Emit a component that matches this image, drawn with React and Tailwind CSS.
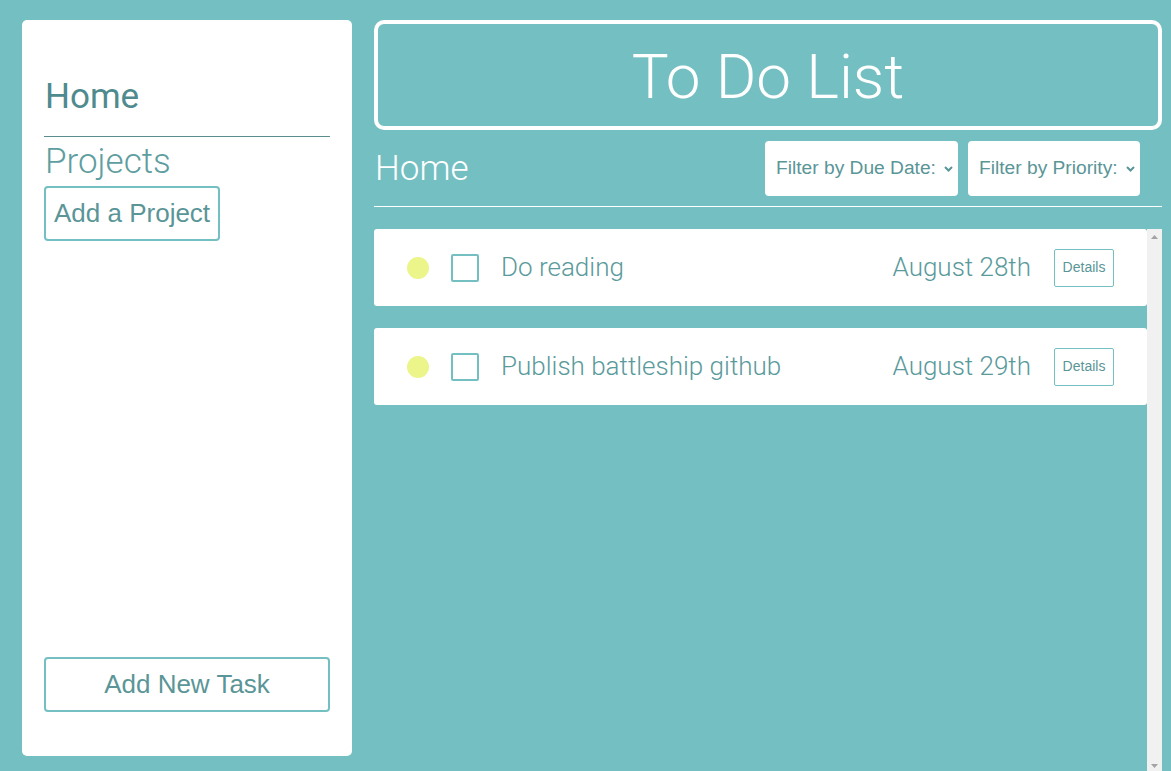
import React from "react";

const tasks = [
  { title: "Do reading", date: "August 28th" },
  { title: "Publish battleship github", date: "August 29th" },
];

function Chevron() {
  return (
    <svg width="9" height="6" viewBox="0 0 9 6" className="shrink-0">
      <path d="M1 1 L4.5 4.5 L8 1" fill="none" stroke="#5a9597" strokeWidth="2" />
    </svg>
  );
}

function FilterSelect({ label, width }) {
  return (
    <div
      className={`h-[55px] ${width} bg-white rounded-[4px] flex items-center justify-between pl-[11px] pr-[5px] text-[19.2px] text-[#5a9597]`}
      style={{ fontFamily: '"Liberation Sans", Arial, sans-serif' }}
    >
      <span>{label}</span>
      <Chevron />
    </div>
  );
}

export default function App() {
  return (
    <div
      className="h-[771px] w-full overflow-hidden bg-[#74bfc2] flex pt-[20px] pl-[22px] pr-[9px]"
      style={{ fontFamily: 'Roboto, "Liberation Sans", sans-serif' }}
    >
      {/* Sidebar */}
      <aside className="w-[330px] h-[736px] shrink-0 bg-white rounded-[5px] flex flex-col px-[22px] pt-[56px] pb-[44px]">
        <div className="text-[35px] leading-[42px] text-[#4f8b8e] pl-[1px]">Home</div>
        <div className="mt-[18px] h-px bg-[#5a8e8f]" />
        <div className="mt-[4px] text-[35px] leading-[41px] font-light text-[#5f9ea0] pl-[1px]">Projects</div>
        <div>
          <button
            className="mt-[4px] h-[55px] px-[8px] border-2 border-[#74bfc2] rounded-[4px] text-[26px] text-[#5a9597] bg-white"
            style={{ fontFamily: '"Liberation Sans", Arial, sans-serif' }}
          >
            Add a Project
          </button>
        </div>
        <button
          className="mt-auto h-[55px] w-full border-2 border-[#74bfc2] rounded-[4px] text-[26px] text-[#5a9597] bg-white"
          style={{ fontFamily: '"Liberation Sans", Arial, sans-serif' }}
        >
          Add New Task
        </button>
      </aside>

      {/* Main */}
      <main className="ml-[22px] w-[788px] flex flex-col min-h-0">
        <header className="h-[110px] border-[4px] border-white rounded-[10px] flex items-center justify-center pt-[3px]">
          <h1 className="text-[62px] font-light text-white leading-none">To Do List</h1>
        </header>

        <div className="mt-[11px] h-[55px] flex items-center justify-between pr-[22px]">
          <h2 className="text-[35px] font-light text-white pl-[1px] pt-[2px]">Home</h2>
          <div className="flex gap-[10px]">
            <FilterSelect label="Filter by Due Date:" width="w-[193px]" />
            <FilterSelect label="Filter by Priority:" width="w-[172px]" />
          </div>
        </div>

        <div className="mt-[10px] h-px bg-white" />

        <div className="mt-[22px] flex-1 min-h-0 flex">
          <div className="flex-1 flex flex-col gap-[22px]">
            {tasks.map((t) => (
              <div
                key={t.title}
                className="h-[77px] bg-white rounded-[3px] flex items-center pl-[33px] pr-[33px]"
              >
                <div className="w-[22px] h-[22px] rounded-full bg-[#ebf58a] shrink-0" />
                <div className="ml-[22px] w-[28px] h-[28px] border-2 border-[#74bfc2] rounded-[2px] shrink-0" />
                <div className="ml-[22px] text-[26px] font-light text-[#5a9a9c]">{t.title}</div>
                <div className="ml-auto text-[26px] font-light text-[#5a9a9c]">{t.date}</div>
                <button
                  className="ml-[23px] w-[60px] h-[38px] border border-[#74bfc2] rounded-[2px] text-[14px] text-[#5a9597] bg-white"
                  style={{ fontFamily: '"Liberation Sans", Arial, sans-serif' }}
                >
                  Details
                </button>
              </div>
            ))}
          </div>
          {/* scrollbar track */}
          <div className="w-[15px] shrink-0 bg-[#f1f1f1] flex flex-col items-center justify-between pt-[6px] pb-[3px]">
            <svg width="7" height="4" viewBox="0 0 7 4">
              <path d="M0 4 L3.5 0 L7 4 Z" fill="#a3a3a3" />
            </svg>
            <svg width="7" height="4" viewBox="0 0 7 4">
              <path d="M0 0 L3.5 4 L7 0 Z" fill="#a3a3a3" />
            </svg>
          </div>
        </div>
      </main>
    </div>
  );
}
